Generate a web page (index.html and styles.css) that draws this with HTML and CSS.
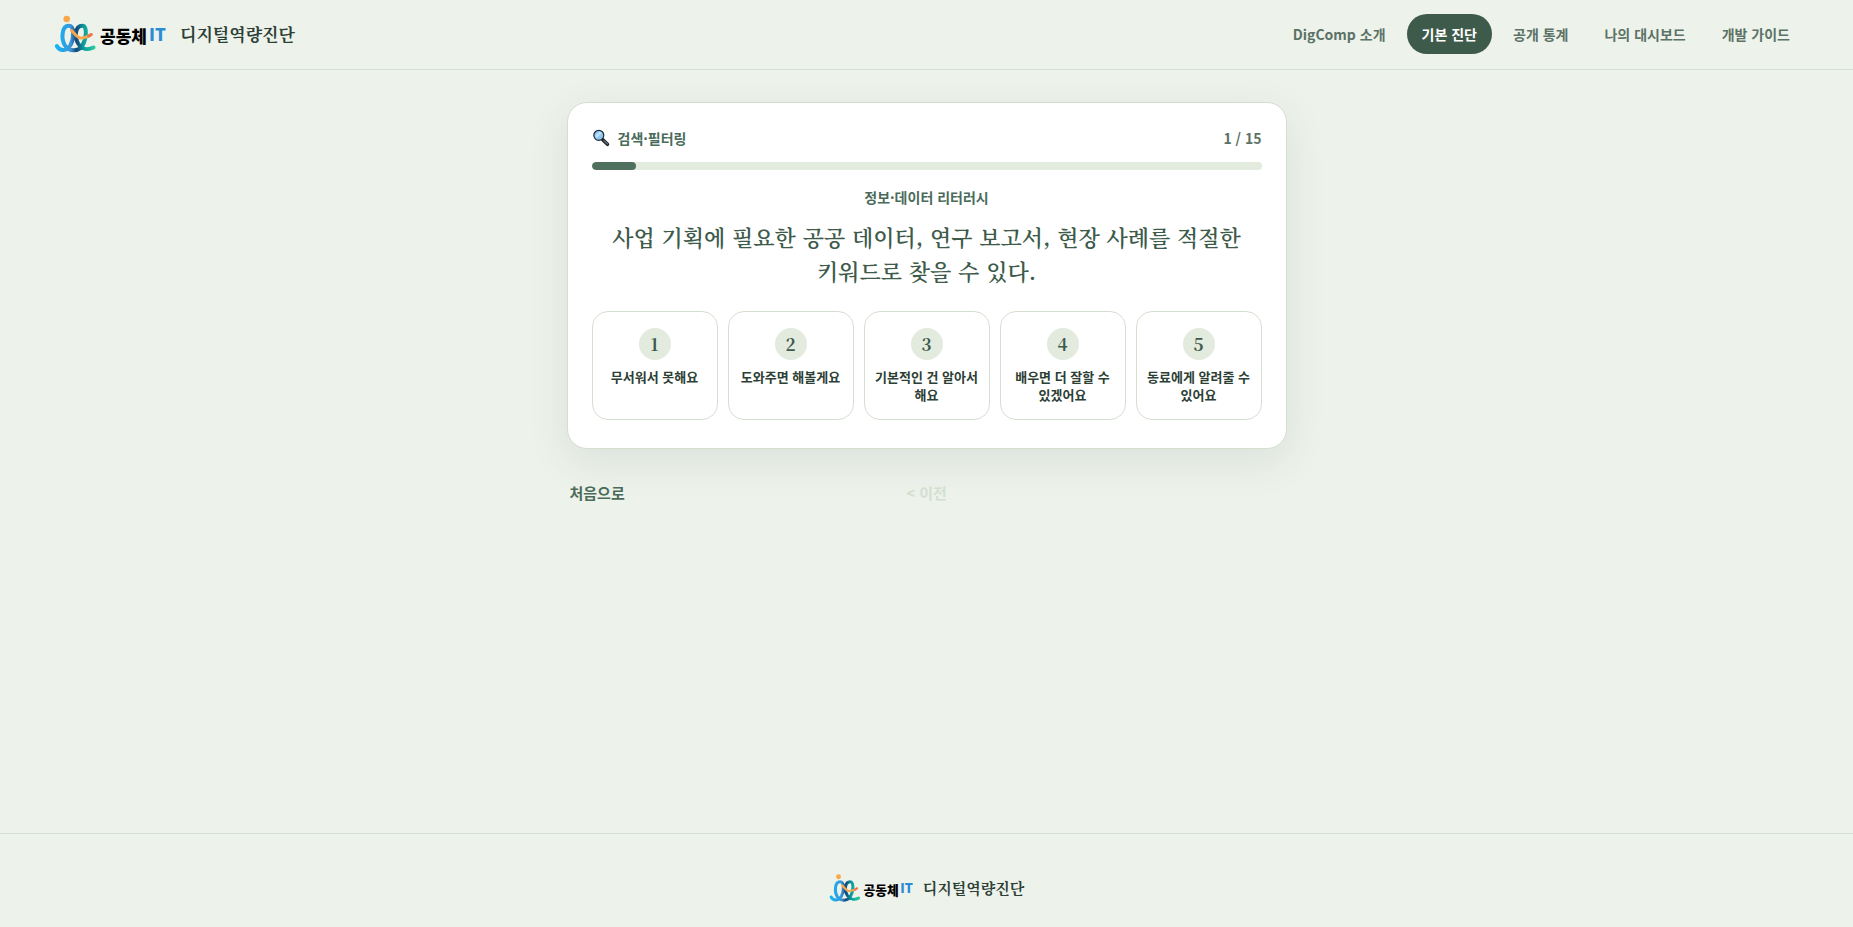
FILE: index.html
```html
<!DOCTYPE html>
<html lang="ko">
<head>
    <meta charset="UTF-8">
    <meta name="viewport" content="width=device-width, initial-scale=1.0">
    <title>디지털역량진단</title>
    <link rel="stylesheet" href="styles.css">
</head>
<body>
    <header class="site-header">
        <a href="#" class="brand">
            <svg class="brand-logo" viewBox="0 0 112 40" role="img" aria-label="공동체IT">
                <defs>
                    <linearGradient id="waveGradient" gradientUnits="userSpaceOnUse" x1="2" y1="0" x2="41" y2="0">
                        <stop offset="0" stop-color="#12b5f5"/>
                        <stop offset="0.38" stop-color="#3a97d8"/>
                        <stop offset="0.52" stop-color="#15447c"/>
                        <stop offset="0.7" stop-color="#0b9a9c"/>
                        <stop offset="1" stop-color="#27cf9d"/>
                    </linearGradient>
                </defs>
                <path class="logo-wave" stroke="url(#waveGradient)" d="M2.800 32C6 38 13 37 16.500 31C20 24.500 20.500 11.800 14.800 11.800C7.500 11.800 7 25 11 31.500C14.500 37.800 25 37.800 28.500 31.500C32.500 25 33.500 11.800 28.500 11.800C20.500 11.800 20.500 24 24.500 30C28 35.500 34 36.200 39.500 33.500"/>
                <path class="logo-arm" d="M17.500 16.500C20 18.500 22.500 23 26 24C29.500 24.500 33 23 37 20.500"/>
                <path class="logo-hand" d="M34.500 22.300L37.300 20.500"/>
                <circle class="logo-dot" cx="12.700" cy="5" r="3.300"/>
                <text class="logo-text" x="46" y="29">공동체</text>
                <text class="logo-text logo-it" x="95" y="27">IT</text>
            </svg>
            <span class="brand-name">디지털역량진단</span>
        </a>
        <nav class="site-nav">
            <a href="#">DigComp 소개</a>
            <a href="#" class="active">기본 진단</a>
            <a href="#">공개 통계</a>
            <a href="#">나의 대시보드</a>
            <a href="#">개발 가이드</a>
        </nav>
    </header>

    <main class="survey">
        <section class="survey-card">
            <div class="survey-status">
                <span class="survey-topic">
                    <svg class="topic-icon" viewBox="0 0 18 18" aria-hidden="true">
                        <path d="M10.500 10.500L15.500 15.300" stroke="#1c2226" stroke-width="3.500" stroke-linecap="round"/>
                        <path d="M12 11.600L15.300 14.800" stroke="#6d777d" stroke-width="1.300" stroke-linecap="round"/>
                        <circle cx="6.800" cy="6.300" r="5" fill="#8fc4f2" stroke="#1c2b38" stroke-width="1.200"/>
                        <path d="M3.300 6.500L7.300 2.600L10 4L4.500 9.200Z" fill="#bfe0fa"/>
                    </svg>
                    검색·필터링
                </span>
                <span class="survey-count">1 / 15</span>
            </div>
            <div class="progress">
                <div class="progress-fill" style="width: 6.6667%"></div>
            </div>
            <p class="survey-category">정보·데이터 리터러시</p>
            <h1 class="survey-question">사업 기획에 필요한 공공 데이터, 연구 보고서, 현장 사례를 적절한 키워드로 찾을 수 있다.</h1>
            <div class="options">
                <button type="button" class="option"><span class="option-number">1</span>무서워서 못해요</button>
                <button type="button" class="option"><span class="option-number">2</span>도와주면 해볼게요</button>
                <button type="button" class="option"><span class="option-number">3</span>기본적인 건 알아서 해요</button>
                <button type="button" class="option"><span class="option-number">4</span>배우면 더 잘할 수 있겠어요</button>
                <button type="button" class="option"><span class="option-number">5</span>동료에게 알려줄 수 있어요</button>
            </div>
        </section>
        <div class="survey-actions">
            <button type="button" class="action-home">처음으로</button>
            <button type="button" class="action-prev" disabled>&lt; 이전</button>
        </div>
    </main>

    <footer class="site-footer">
        <a href="#" class="brand brand-small">
            <svg class="brand-logo" viewBox="0 0 112 40" role="img" aria-label="공동체IT">
                <path class="logo-wave" stroke="url(#waveGradient)" d="M2.800 32C6 38 13 37 16.500 31C20 24.500 20.500 11.800 14.800 11.800C7.500 11.800 7 25 11 31.500C14.500 37.800 25 37.800 28.500 31.500C32.500 25 33.500 11.800 28.500 11.800C20.500 11.800 20.500 24 24.500 30C28 35.500 34 36.200 39.500 33.500"/>
                <path class="logo-arm" d="M17.500 16.500C20 18.500 22.500 23 26 24C29.500 24.500 33 23 37 20.500"/>
                <path class="logo-hand" d="M34.500 22.300L37.300 20.500"/>
                <circle class="logo-dot" cx="12.700" cy="5" r="3.300"/>
                <text class="logo-text" x="46" y="29">공동체</text>
                <text class="logo-text logo-it" x="95" y="27">IT</text>
            </svg>
            <span class="brand-name">디지털역량진단</span>
        </a>
    </footer>
</body>
</html>
```
FILE: styles.css
```css
* {
    box-sizing: border-box;
}

body {
    font-family: "Noto Sans CJK KR", "Noto Sans KR", sans-serif;
    margin: 0;
    min-height: 100vh;
    display: flex;
    flex-direction: column;
    background-color: #edf2eb;
    color: #2c4035;
    word-break: keep-all;
}

a {
    color: inherit;
    text-decoration: none;
}

button {
    font-family: inherit;
    background: none;
    border: none;
    cursor: pointer;
}

/* Header */
.site-header {
    display: flex;
    justify-content: space-between;
    align-items: center;
    height: 70px;
    padding: 0 48px 2px 54px;
    border-bottom: 1px solid #d6dfd5;
}

.brand {
    display: flex;
    align-items: center;
    gap: 14px;
}

.brand-logo {
    display: block;
    width: 112px;
    height: 40px;
}

.brand-name {
    font-family: "Noto Serif CJK KR", "Noto Serif KR", serif;
    font-size: 17px;
    font-weight: 700;
    line-height: 24px;
}

.logo-wave,
.logo-arm,
.logo-hand {
    fill: none;
    stroke-width: 4;
    stroke-linecap: round;
}

.logo-arm {
    stroke: #f9a94a;
    stroke-width: 3;
}

.logo-hand {
    stroke: #ee7552;
    stroke-width: 3;
}

.logo-dot {
    fill: #f9a94a;
}

.logo-text {
    font-size: 17px;
    font-weight: 900;
    fill: #000;
}

.logo-it {
    fill: #2a8cd4;
}

.site-nav {
    display: flex;
    gap: 6px;
}

.site-nav a {
    padding: 0 15px;
    border-radius: 20px;
    font-size: 14px;
    font-weight: 700;
    line-height: 40px;
    color: #5c7266;
}

.site-nav a.active {
    background: #3d5a4a;
    color: #fff;
}

/* Survey */
.survey {
    flex: 1;
    width: 100%;
    max-width: 720px;
    margin: 0 auto;
    padding-top: 32px;
}

.survey-card {
    padding: 24px 24px 28px;
    background: #fff;
    border: 1px solid #d5dfd0;
    border-radius: 20px;
    box-shadow: 0 12px 40px rgba(61, 90, 74, 0.1);
}

.survey-status {
    display: flex;
    justify-content: space-between;
    align-items: center;
    height: 22px;
    margin-bottom: 13px;
    font-size: 14px;
    font-weight: 700;
}

.survey-topic {
    display: flex;
    align-items: center;
    gap: 8px;
    color: #4a6b5a;
}

.topic-icon {
    width: 18px;
    height: 18px;
    fill: none;
}

.survey-count {
    color: #5c7266;
}

.progress {
    height: 8px;
    border-radius: 4px;
    background: #e3ebdf;
    overflow: hidden;
}

.progress-fill {
    height: 100%;
    border-radius: 4px;
    background: #4f705f;
}

.survey-category {
    margin: 17px 0 13px;
    text-align: center;
    font-size: 14px;
    font-weight: 700;
    line-height: 20px;
    color: #4a6b5a;
}

.survey-question {
    margin: 0 0 23px;
    text-align: center;
    font-family: "Noto Serif CJK KR", "Noto Serif KR", serif;
    font-size: 22px;
    font-weight: 600;
    line-height: 34px;
    color: #3d5a4a;
}

.options {
    display: grid;
    grid-template-columns: repeat(5, 1fr);
    gap: 10px;
}

.option {
    display: flex;
    flex-direction: column;
    align-items: center;
    gap: 8px;
    padding: 16px 8px 15px;
    border: 1px solid #d5dfd0;
    border-radius: 16px;
    font-size: 13px;
    font-weight: 700;
    line-height: 18px;
    color: #2c4035;
}

.option-number {
    width: 32px;
    height: 32px;
    border-radius: 50%;
    background: #e3ebdf;
    font-family: "Noto Serif CJK KR", "Noto Serif KR", serif;
    font-size: 17px;
    font-weight: 700;
    line-height: 32px;
    color: #3d5a4a;
}

.survey-actions {
    display: grid;
    grid-template-columns: 1fr auto 1fr;
    margin-top: 32px;
}

.survey-actions button {
    padding: 0 3px;
    font-size: 15px;
    font-weight: 700;
    line-height: 24px;
    color: #4a6b5a;
}

.survey-actions .action-home {
    justify-self: start;
}

.survey-actions .action-prev {
    color: #d5dfd0;
    cursor: default;
}

/* Footer */
.site-footer {
    display: flex;
    justify-content: center;
    padding: 39px 0 24px;
    border-top: 1px solid #d6dfd5;
}

.brand-small {
    gap: 10px;
}

.brand-small .brand-logo {
    width: 84px;
    height: 30px;
}

.brand-small .brand-name {
    font-size: 15px;
}
```
